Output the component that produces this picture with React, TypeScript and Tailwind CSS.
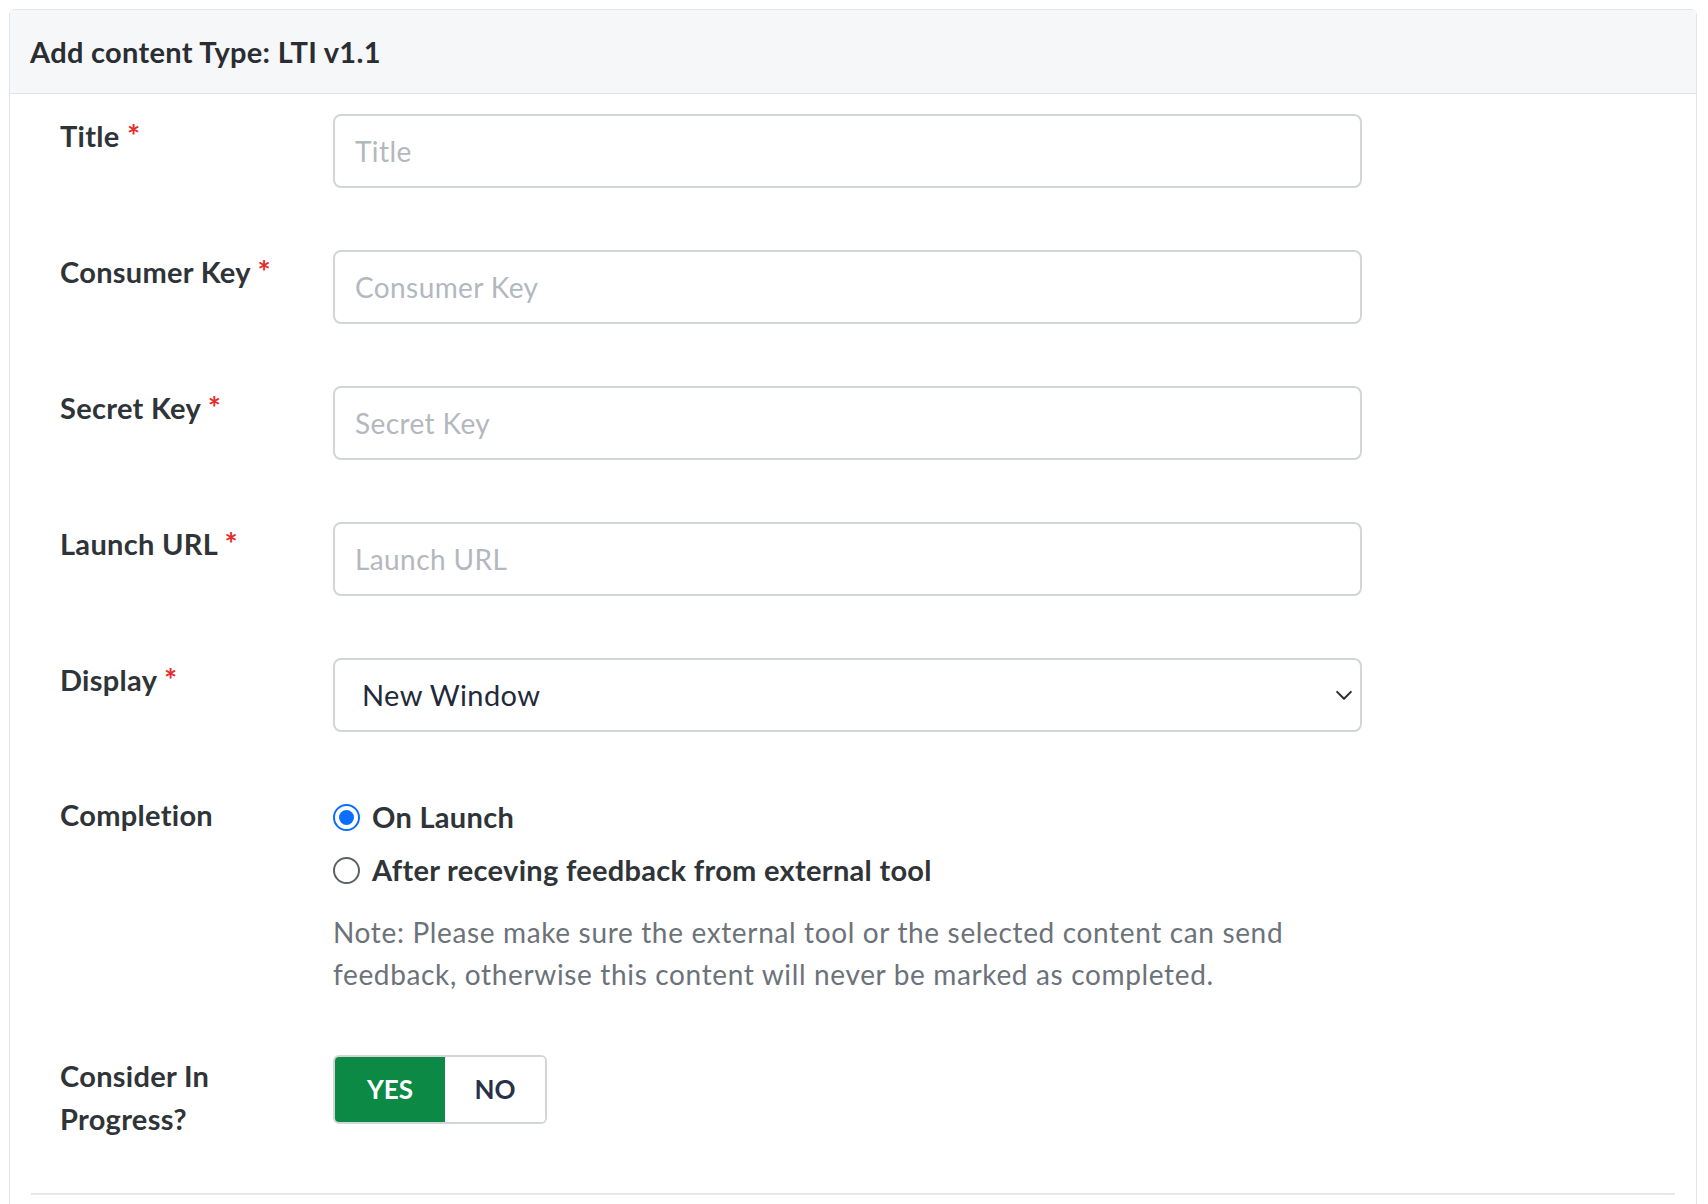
export default function App() {
  const fields = [
    { label: "Title", placeholder: "Title" },
    { label: "Consumer Key", placeholder: "Consumer Key" },
    { label: "Secret Key", placeholder: "Secret Key" },
    { label: "Launch URL", placeholder: "Launch URL" },
  ];

  return (
    <div className="min-h-screen bg-white pt-[9px] pl-[9px] pr-[11px] font-['Lato','Open_Sans',sans-serif] text-[#2f3438]">
      <div className="border border-[#e1e4e8] rounded-t-[6px] h-[1200px]">
        <div className="h-[84px] bg-[#f6f7f9] border-b border-[#e1e4e8] flex items-center px-[20px]">
          <h1 className="text-[29px] tracking-[0.3px] font-bold text-[#2a2e33]">Add content Type: LTI v1.1</h1>
        </div>

        <div className="px-[21px] pt-[20px]">
          <div className="pl-[29px]">
            {fields.map((f) => (
              <div key={f.label} className="flex mb-[62px]">
                <label className="w-[273px] shrink-0 text-[29px] tracking-[0.3px] leading-[42px] font-bold">
                  {f.label} <span className="text-[#e52b2b] text-[31px]">*</span>
                </label>
                <input
                  placeholder={f.placeholder}
                  className="w-[1029px] h-[74px] rounded-[8px] border-2 border-[#d3d6d9] px-[20px] text-[28px] tracking-[0.4px] text-[#212529] placeholder:text-[#b3b8bf] outline-none"
                />
              </div>
            ))}

            <div className="flex mb-[62px]">
              <label className="w-[273px] shrink-0 text-[29px] tracking-[0.3px] leading-[42px] font-bold">
                Display <span className="text-[#e52b2b] text-[31px]">*</span>
              </label>
              <div className="relative w-[1029px] h-[74px] rounded-[8px] border-2 border-[#d3d6d9] flex items-center px-[27px]">
                <span className="text-[29px] tracking-[0.4px] text-[#1f2a3a]">New Window</span>
                <svg className="absolute right-[6px] top-1/2 -translate-y-1/2" width="20" height="20" viewBox="0 0 16 16" fill="none" stroke="#2a2e33" strokeWidth="1.6" strokeLinecap="round" strokeLinejoin="round">
                  <path d="M2.5 5.5 8 11l5.5-5.5" />
                </svg>
              </div>
            </div>

            <div className="flex">
              <label className="w-[273px] shrink-0 text-[29px] tracking-[0.3px] leading-[42px] font-bold">Completion</label>
              <div className="w-[1029px]">
                <div className="flex items-center h-[46px]">
                  <span className="w-[27px] h-[27px] rounded-full border-2 border-[#0d6efd] flex items-center justify-center">
                    <span className="w-[15px] h-[15px] rounded-full bg-[#0d6efd]" />
                  </span>
                  <span className="ml-[12px] text-[29px] tracking-[0.3px] font-bold">On Launch</span>
                </div>
                <div className="flex items-center h-[46px] mt-[7px]">
                  <span className="w-[27px] h-[27px] rounded-full border-2 border-[#5c6166]" />
                  <span className="ml-[12px] text-[29px] tracking-[0.3px] font-bold">After receving feedback from external tool</span>
                </div>
                <p className="mt-[18px] text-[28px] tracking-[0.65px] leading-[42px] text-[#6c727a] w-[980px]">
                  Note: Please make sure the external tool or the selected content can send feedback, otherwise this content will never be marked as completed.
                </p>
              </div>
            </div>

            <div className="flex mt-[59px]">
              <label className="w-[273px] shrink-0 text-[29px] tracking-[0.3px] leading-[43px] font-bold">
                Consider In
                <br />
                Progress?
              </label>
              <div className="flex h-[69px] mt-[1px] rounded-[6px] border-2 border-[#d3d6d9] overflow-hidden">
                <button className="w-[110px] bg-[#0c8a45] text-white text-[26px] font-bold">YES</button>
                <button className="w-[100px] bg-white text-[#27324a] text-[26px] font-bold">NO</button>
              </div>
            </div>
          </div>

          <div className="mt-[53px] border-t-2 border-[#e6e8eb]" />
        </div>
      </div>
    </div>
  );
}
